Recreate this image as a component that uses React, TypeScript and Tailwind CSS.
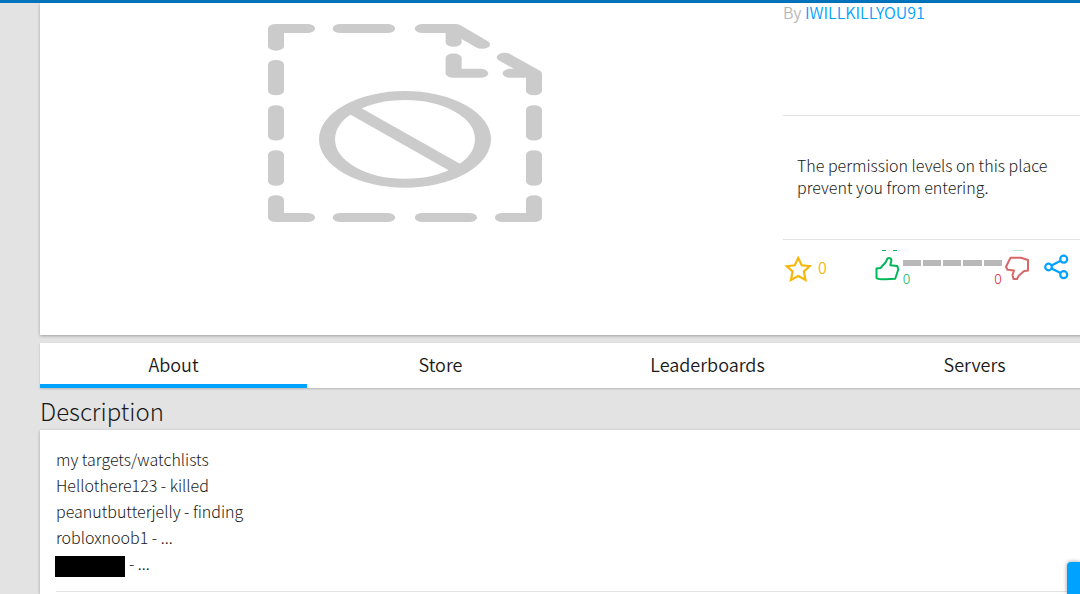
import React from "react";

const tabs = ["About", "Store", "Leaderboards", "Servers"];
const lines = [
  "my targets/watchlists",
  "Hellothere123 - killed",
  "peanutbutterjelly - finding",
  "robloxnoob1 - ...",
];

function MissingThumbnail() {
  return (
    <svg
      viewBox="0 0 462 594"
      preserveAspectRatio="none"
      className="h-[198px] w-[274px]"
      fill="none"
      stroke="#cbcbcb"
      strokeWidth="27"
      strokeLinecap="round"
      strokeLinejoin="round"
      role="img"
      aria-label="Thumbnail unavailable"
    >
      <path d="M66 13.5H13.5V66.5M13.5 121.5V200.5M13.5 257V336M13.5 392V472M13.5 527V580.5H66" />
      <path d="M122.500 13.500H201M261 13.500H315L361 61M313 20V55" />
      <path d="M313 102V148H358M409 148H444M399 100L448.500 149V200.500" />
      <path d="M448.500 257V336M448.500 392V472M448.500 527V580.500H396M339 580.500H261M201 580.500H122.500" />
      <circle cx="231" cy="346" r="131.500" />
      <path d="M143 257L320 435" strokeLinecap="butt" />
    </svg>
  );
}

function StarIcon() {
  return (
    <svg viewBox="0 0 28 27" className="h-[27px] w-7" fill="none" stroke="#f6b70c" strokeWidth="2.2" aria-hidden="true">
      <path d="M14.200 3L17.700 10.300L25.600 11.200L19.900 16.500L21.500 24.900L14.200 21L7 24.900L8.600 16.500L2.800 11.200L10.700 10.300Z" />
    </svg>
  );
}

function ThumbUpIcon() {
  return (
    <svg viewBox="0 0 28 32" className="h-8 w-7" fill="none" stroke="#02b757" strokeWidth="2" strokeLinejoin="round" aria-hidden="true">
      <path d="M7 .5H11M18 .5H22" strokeWidth="1" />
      <path d="M1.500 18.500L5.500 18L10.500 12.500L12.500 8.500Q15.500 7.200 16.500 10L15.300 15.200L22.300 16L23.300 19.500L20.200 28.800Q12 29.500 4 29L1.500 28Z" />
    </svg>
  );
}

function ThumbDownIcon() {
  return (
    <svg viewBox="0 0 28 32" className="h-8 w-7" fill="none" stroke="#d86868" strokeWidth="2" strokeLinejoin="round" aria-hidden="true">
      <path d="M10.500 .5H21.500" stroke="#b5e8cb" strokeWidth="1" />
      <path d="M8.500 7.700H19L26 10V20.500L21.800 21.300L16.500 26L15 29H11.500L10.500 25L12 20.500L5.500 19.800L4 16.800Z" />
    </svg>
  );
}

function ShareIcon() {
  return (
    <svg viewBox="0 0 25 26" className="h-[26px] w-[25px]" fill="none" stroke="#00a2ff" strokeWidth="2.200" aria-hidden="true">
      <circle cx="4.500" cy="13" r="3.300" />
      <circle cx="19.700" cy="5.200" r="3.500" />
      <circle cx="19.700" cy="20.700" r="3.500" />
      <path d="M7.500 11.500L16.600 6.800M7.500 14.500L16.600 19.100" />
    </svg>
  );
}

export default function App() {
  return (
    <div className="min-h-screen overflow-x-clip border-t-[3px] border-[#0074bd] bg-[#e3e3e3] pl-10 font-['Noto_Sans_CJK_SC','Noto_Sans',sans-serif] text-base font-light text-[#191919]">
      <div className="-mr-7">
        <section className="flex h-[332px] bg-white shadow-[0_1px_3px_rgba(0,0,0,0.3)]">
          <div className="flex flex-1 justify-center pt-[21px]">
            <MissingThumbnail />
          </div>
          <div className="ml-[13px] w-[325px]">
            <div className="h-28 leading-[18px] font-[350] text-[#b8b8b8]">
              By{" "}
              <a href="#creator" className="text-[#00a2ff]">
                IWILLKILLYOU91
              </a>
            </div>
            <p className="h-[125px] border-y border-[#e3e3e3] pt-[38px] pr-12 pl-3.5 leading-[22px]">
              The permission levels on this place prevent you from entering.
            </p>
            <div className="flex items-start pt-2 pl-px">
              <button aria-label="Favorite" className="flex items-start gap-1.5 pt-[7px] font-[350] text-[#f6b70c]">
                <StarIcon />
                <span className="leading-6">0</span>
              </button>
              <div className="ml-12 flex">
                <button aria-label="Like" className="self-start pt-0.5">
                  <ThumbUpIcon />
                </button>
                <div className="w-[99px] pt-3">
                  <div className="grid grid-cols-5 gap-0.5">
                    {[0, 1, 2, 3, 4].map((n) => (
                      <span key={n} className="h-1.5 bg-[#b8b8b8]" />
                    ))}
                  </div>
                  <div className="flex justify-between pt-1 text-sm leading-4">
                    <span className="text-[#02b757]">0</span>
                    <span className="text-[#e2231a]">0</span>
                  </div>
                </div>
                <button aria-label="Dislike" className="self-start pt-0.5">
                  <ThumbDownIcon />
                </button>
              </div>
              <button aria-label="Share" className="ml-3.5 pt-1.5">
                <ShareIcon />
              </button>
            </div>
          </div>
        </section>

        <nav className="mt-2 grid h-[45px] grid-cols-4 bg-white text-lg font-[350] shadow-[0_1px_2px_rgba(0,0,0,0.2)]">
          {tabs.map((tab, i) => (
            <a
              key={tab}
              href={"#" + tab.toLowerCase()}
              className={
                i === 0
                  ? "h-[45px] border-b-4 border-[#00a2ff] text-center leading-[43px]"
                  : "h-[45px] text-center leading-[43px]"
              }
            >
              {tab}
            </a>
          ))}
        </nav>

        <h2 className="h-[42px] text-2xl leading-[46px]">Description</h2>

        <section className="min-h-[164px] bg-white px-4 pt-4 shadow-[0_1px_3px_rgba(0,0,0,0.3)]">
          <div className="border-b border-[#e3e3e3] pb-3.5 leading-[26px]">
            {lines.map((line) => (
              <p key={line}>{line}</p>
            ))}
            <p className="-ml-px flex items-start gap-1">
              <span className="mt-1.5 h-[21px] w-[70px] bg-black" />
              <span>- ...</span>
            </p>
          </div>
        </section>
      </div>
      <button aria-label="Open chat" className="fixed right-0 bottom-0 h-8 w-[13px] rounded-tl bg-[#00a2ff] shadow-[0_0_4px_rgba(0,0,0,0.4)]" />
    </div>
  );
}
